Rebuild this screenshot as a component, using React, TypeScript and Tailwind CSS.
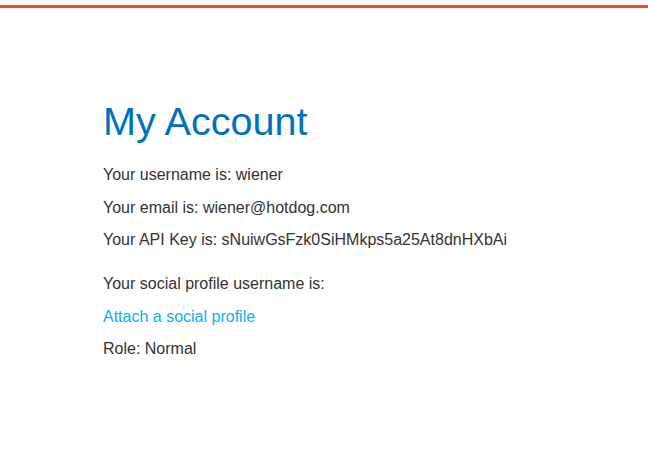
export default function App() {
  return (
    <div className="min-h-[450px] bg-white font-['Liberation_Sans',Arial,sans-serif]">
      <div className="pt-[5px]">
        <div className="h-[3px] bg-[#ff4136]"></div>
      </div>

      <section className="pl-[103px] pt-[90px]">
        <h1 className="text-[39.6px] leading-[46px] text-[#0071bc] mb-[19px]">My Account</h1>

        <div className="text-[16px] leading-[24px] text-[#333332]">
          <p className="mb-[8.5px]">Your username is: wiener</p>
          <p className="mb-[8.5px]">Your email is: wiener@hotdog.com</p>
          <p className="mb-[20px]">Your API Key is: sNuiwGsFzk0SiHMkps5a25At8dnHXbAi</p>

          <p className="mb-[8.5px]">Your social profile username is: </p>
          <p className="mb-[8.5px]">
            <a href="#" className="text-[#0cb1e6]">Attach a social profile</a>
          </p>
          <p>Role: Normal</p>
        </div>
      </section>
    </div>
  );
}
